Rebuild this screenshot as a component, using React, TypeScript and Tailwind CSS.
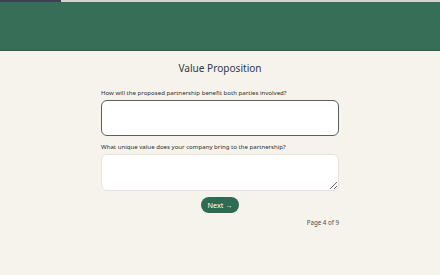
import React from 'react';

const App: React.FC = () => {
  return (
    <div className="min-h-screen w-full bg-[#f5f3ec] font-['Noto_Sans',sans-serif]">
      <div className="flex h-[2px] w-full">
        <div className="w-[61px] bg-[#3c4054]" />
        <div className="flex-1 bg-[#d3d3d0]" />
      </div>
      <div className="h-[49px] w-full bg-[#366e57] border-b border-[#2c5b47]" />

      <div className="mx-auto w-[238px] pt-[10px]">
        <h1 className="text-center text-[10.1px] leading-[14px] text-[#2f3a4a]">Value Proposition</h1>

        <label className="mt-[13px] block text-[6.1px] leading-[9px] text-[#2e2e2e]">
          How will the proposed partnership benefit both parties involved?
        </label>
        <textarea
          className="mt-[3px] block h-[36px] w-full resize-none rounded-[6px] border-[1.5px] border-[#5b5f66] bg-white outline-none"
        />

        <label className="mt-[6px] block text-[6.1px] leading-[9px] text-[#2e2e2e]">
          What unique value does your company bring to the partnership?
        </label>
        <textarea
          className="mt-[3px] block h-[37px] w-full resize-y rounded-[6px] border border-[#e6e4dd] bg-white outline-none"
        />

        <div className="mt-[6px] flex justify-center">
          <button className="flex h-[16px] items-center rounded-full bg-[#2f6a52] px-[6.5px] text-[7.3px] text-white">
            Next →
          </button>
        </div>

        <div className="mt-[5px] text-right text-[6.2px] leading-[9px] text-[#4a4f57]">Page 4 of 9</div>
      </div>
    </div>
  );
};

export default App;
